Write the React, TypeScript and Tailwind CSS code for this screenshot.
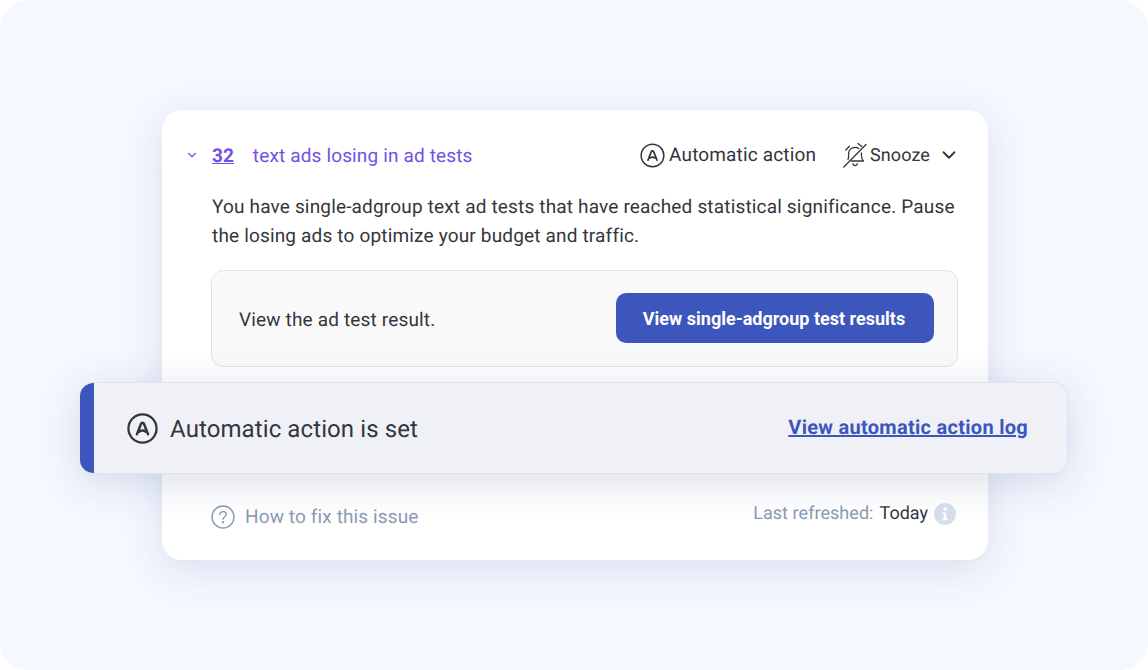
import { ChevronDown } from 'lucide-react'

const AutoIcon = ({ size, stroke }: { size: number; stroke: number }) => (
  <svg width={size} height={size} viewBox="0 0 30 30" fill="none" stroke="#33363d" strokeWidth={stroke} strokeLinecap="round" strokeLinejoin="round" className="shrink-0">
    <circle cx="15" cy="15" r="13.6" />
    <path d="M9.6 20.6 13.6 10.4c.5-1.3 2.3-1.3 2.8 0l4 10.2" strokeWidth={stroke + 0.2} />
    <path d="M11.8 18c2-1.2 4.4-1.2 6.4 0" strokeWidth={stroke + 0.2} />
  </svg>
)

const SnoozeIcon = () => (
  <svg width="24" height="26" viewBox="0 0 24 26" fill="none" stroke="#33363d" strokeWidth="1.3" strokeLinecap="round" strokeLinejoin="round" className="shrink-0">
    <path d="M5 17.5c.4-1 .6-2.2.6-3.5V11.5c0-3.4 2.8-6.2 6.4-6.2 1.5 0 2.9.5 3.9 1.3" />
    <path d="M18.5 11V14c0 2 .5 3.6 2 5H8.5" />
    <path d="M9.8 21.8c.5 1.2 1.3 1.8 2.3 1.8s1.8-.6 2.3-1.8" />
    <path d="M2.8 8 6.5 4.2M15 1.4l3.8 3" />
    <path d="M.8 25 23 2.5" />
  </svg>
)

const App = () => {
  return (
    <div className="h-[670px] w-[1148px] overflow-hidden bg-white font-['Roboto',sans-serif] [text-rendering:geometricPrecision]">
      <div className="flex h-full flex-col items-center rounded-[28px] bg-[#f4f8ff] pl-[2px] pt-[110px]">
        <div className="flex h-[450px] w-[826px] flex-col rounded-[20px] bg-white shadow-[0_10px_40px_rgba(60,80,130,0.14)]">
          <div className="flex h-[90px] shrink-0 items-center pl-[23px] pr-[28px]">
            <ChevronDown size={14} strokeWidth={2} className="text-[#7350e6]" />
            <a className="ml-[13px] mt-[1px] text-[19px] font-bold leading-none text-[#7350e6] underline">32</a>
            <span className="ml-[19px] mt-[2px] text-[19px] tracking-[0.15px] text-[#7350e6]">text ads losing in ad tests</span>
            <div className="ml-auto flex items-center">
              <AutoIcon size={25} stroke={1.8} />
              <span className="ml-[4px] text-[19px] tracking-[0.15px] text-[#33363d]">Automatic action</span>
              <div className="ml-[27px]"><SnoozeIcon /></div>
              <span className="ml-[3px] text-[18px] tracking-[0.1px] text-[#33363d]">Snooze</span>
              <ChevronDown size={22} strokeWidth={2} className="ml-[8px] text-[#33363d]" />
            </div>
          </div>
          <p className="-mt-[8px] ml-[50px] mr-[30px] text-[19px] leading-[29px] tracking-[0.17px] text-[#33363d]">
            You have single-adgroup text ad tests that have reached statistical significance. Pause the losing ads to optimize your budget and traffic.
          </p>
          <div className="ml-[49px] mr-[30px] mt-[20px] flex h-[97px] shrink-0 items-center justify-between rounded-[12px] border border-[#dbe3ef] bg-[#f9f9fa] pl-[27px] pr-[23px]">
            <span className="mt-[3px] text-[19px] tracking-[0.16px] text-[#33363d]">View the ad test result.</span>
            <button className="-mt-[1px] h-[50px] w-[318px] rounded-[10px] bg-[#3c56bd] pr-[2px] text-[18px] font-bold text-white">View single-adgroup test results</button>
          </div>
          <div className="relative z-10 -ml-[82px] -mr-[80px] mt-[15px] flex h-[92px] shrink-0 items-center overflow-hidden rounded-[14px] border border-l-0 border-[#dfe4ee] bg-[#f0f1f7] shadow-[0_8px_40px_rgba(60,80,130,0.18)]">
            <div className="h-full w-[14px] shrink-0 bg-[#3c56bd]" />
            <div className="ml-[33px]"><AutoIcon size={31} stroke={2.2} /></div>
            <span className="ml-[12px] mt-[2px] text-[24px] tracking-[0.1px] text-[#33363d]">Automatic action is set</span>
            <a className="-mt-[2px] ml-auto mr-[39px] text-[20px] font-bold tracking-[0.28px] text-[#3c56bd] underline">View automatic action log</a>
          </div>
          <div className="flex flex-1 items-center justify-between pl-[49px] pr-[32px]">
            <div className="flex items-center">
              <svg width="24" height="24" viewBox="0 0 24 24" fill="none" stroke="#8a9bb2" strokeWidth="1.4" strokeLinecap="round" className="-mt-[1px]">
                <circle cx="12" cy="12" r="11" />
                <path d="M8.8 9.5C9 7.6 10.3 6.6 12.1 6.6c1.9 0 3.2 1.1 3.2 2.7 0 2.4-3.2 2.4-3.2 4.9" />
                <circle cx="12.1" cy="17.2" r="0.5" fill="#8a9bb2" />
              </svg>
              <span className="ml-[10px] text-[19px] tracking-[0.12px] text-[#8a9bb2]">How to fix this issue</span>
            </div>
            <div className="-mt-[8px] flex items-center">
              <span className="text-[18px] tracking-[0.05px] text-[#8a9bb2]">Last refreshed:</span>
              <span className="ml-[6px] text-[18px] text-[#33363d]">Today</span>
              <svg width="22" height="22" viewBox="0 0 22 22" className="ml-[6px] mt-[1px]">
                <circle cx="11" cy="11" r="11" fill="#d6e0ec" />
                <circle cx="11" cy="5.8" r="1.9" fill="#fff" />
                <path d="M8.4 9.4h3.9v6.2h1.5v1.7H8.2v-1.7h1.6v-4.5H8.4z" fill="#fff" />
              </svg>
            </div>
          </div>
        </div>
      </div>
    </div>
  )
}

export default App
